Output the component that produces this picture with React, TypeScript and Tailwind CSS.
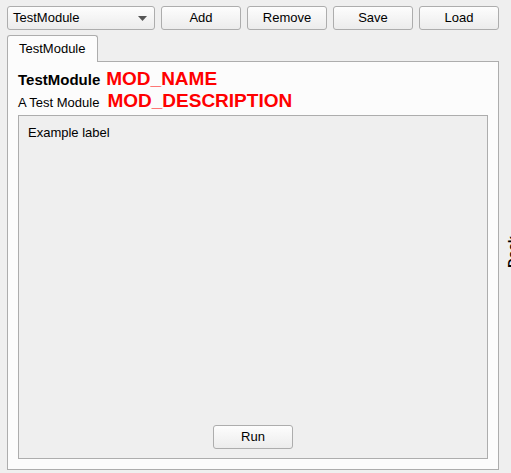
import React from "react";

const btn =
  "w-[80px] h-[24px] rounded-[3px] border border-[#adadad] bg-gradient-to-b from-[#fdfdfd] to-[#ececec] text-[13px] text-black flex items-center justify-center";

export default function App() {
  return (
    <div
      className="relative w-[511px] h-[473px] overflow-hidden bg-[#efefef] text-black"
      style={{ fontFamily: '"Liberation Sans", Arial, sans-serif' }}
    >
      <div className="flex flex-col px-[7px] pt-[6px]">
        <div className="flex gap-[6px] h-[24px]">
          <div className="w-[148px] h-[24px] rounded-[3px] border border-[#adadad] bg-gradient-to-b from-[#fdfdfd] to-[#ececec] flex items-center pl-[5px] pr-[7px]">
            <span className="text-[13px] flex-1">TestModule</span>
            <svg width="9" height="5" viewBox="0 0 9 5">
              <path d="M0 0 L9 0 L4.5 5 Z" fill="#555" />
            </svg>
          </div>
          <div className={btn}>Add</div>
          <div className={btn}>Remove</div>
          <div className={btn}>Save</div>
          <div className={btn}>Load</div>
        </div>
        <div className="flex mt-[5px] relative z-10">
          <div className="w-[91px] h-[27px] bg-[#fcfcfc] border border-b-0 border-[#adadad] rounded-t-[3px] flex items-center pl-[11px] text-[13px]">
            TestModule
          </div>
        </div>
        <div className="w-[492px] h-[409px] -mt-[1px] bg-[#fcfcfc] border border-[#adadad] flex flex-col pl-[10px] pr-[10px] pt-[6px] pb-[10px]">
          <div className="flex items-baseline gap-[6px] leading-[21px]">
            <span className="text-[15px] font-bold">TestModule</span>
            <span className="text-[19px] font-bold text-[#ff0000]">MOD_NAME</span>
          </div>
          <div className="flex items-baseline gap-[8px] leading-[21px]">
            <span className="text-[13px]">A Test Module</span>
            <span className="text-[19px] font-bold text-[#ff0000]">MOD_DESCRIPTION</span>
          </div>
          <div className="mt-[2px] flex-1 bg-[#efefef] border border-[#adadad] flex flex-col px-[9px] pt-[9px] pb-[9px]">
            <div className="text-[13px] leading-[16px]">Example label</div>
            <div className="flex-1" />
            <div className="flex justify-center">
              <div className={btn}>Run</div>
            </div>
          </div>
        </div>
      </div>
      <div
        className="absolute left-[506px] top-[236px] text-[13px] font-bold leading-[14px]"
        style={{ writingMode: "vertical-rl", transform: "rotate(180deg)" }}
      >
        Dock
      </div>
    </div>
  );
}
